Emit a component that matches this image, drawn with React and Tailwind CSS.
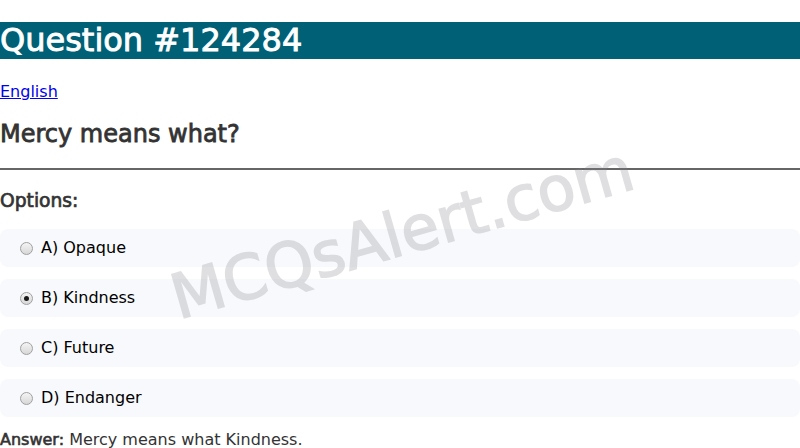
import React from "react";

const options = [
  { id: "a", label: "A) Opaque" },
  { id: "b", label: "B) Kindness", checked: true },
  { id: "c", label: "C) Future" },
  { id: "d", label: "D) Endanger" },
];

// Radio drawn by hand so it keeps the old grey look
const Radio = ({ checked }) => (
  <span className="flex h-[13px] w-[13px] shrink-0 items-center justify-center rounded-full border border-[#a0a0a0] bg-gradient-to-b from-[#f4f4f4] to-[#d8d8d8]">
    {checked && <span className="h-[5px] w-[5px] rounded-full bg-[#1a1a1a]" />}
  </span>
);

export default function App() {
  return (
    <div className="relative w-[800px] h-[448px] overflow-hidden bg-white font-['DejaVu_Sans',sans-serif] text-[#333]">
      <h1 className="mt-[22px] h-[37px] bg-[#006076] text-[32px] leading-[37px] font-normal text-white [-webkit-text-stroke:0.9px_currentColor]">
        Question #124284
      </h1>

      <p className="mt-[23px] text-[16px] leading-[19px]">
        <a href="#" className="text-[#0000ee] underline">
          English
        </a>
      </p>

      <h2 className="mt-[19px] text-[24px] leading-[28px] font-normal [-webkit-text-stroke:0.8px_currentColor]">
        Mercy means what?
      </h2>

      <hr className="mt-[20px] border-0 border-t-2 border-t-[#666]" />

      <h3 className="mt-[20px] text-[18.7px] leading-[22px] font-normal [-webkit-text-stroke:0.7px_currentColor]">
        Options:
      </h3>

      <div className="mt-[17px] flex flex-col gap-[12px]">
        {options.map((opt) => (
          <div
            key={opt.id}
            className="flex h-[38px] items-center gap-[8px] rounded-[8px] bg-[#f8f9fc] pl-[20px] text-[16px] text-black"
          >
            <Radio checked={opt.checked} />
            <span>{opt.label}</span>
          </div>
        ))}
      </div>

      <p className="mt-[13px] text-[16px] leading-[19px]">
        <span className="[-webkit-text-stroke:0.6px_currentColor]">Answer:</span> Mercy means what Kindness.
      </p>

      {/* watermark */}
      <div className="pointer-events-none absolute left-[402px] top-[233px] -translate-x-1/2 -translate-y-1/2 -rotate-[16deg] whitespace-nowrap text-[62px] font-normal text-[#84848c] opacity-25 [-webkit-text-stroke:1.5px_#84848c]">
        MCQsAlert.com
      </div>
    </div>
  );
}
